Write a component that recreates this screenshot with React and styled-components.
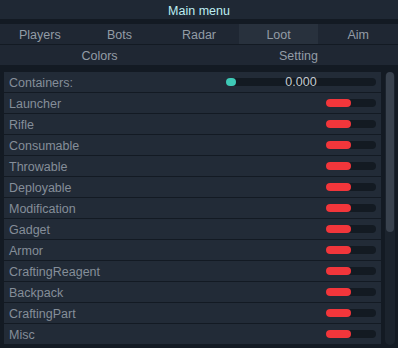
import React from "react";
import styled, { createGlobalStyle } from "styled-components";

const GlobalStyle = createGlobalStyle`
  html, body {
    margin: 0;
    padding: 0;
    background: #131a23;
    font-family: "Liberation Sans", Arial, sans-serif;
    overflow: hidden;
  }
`;

const TABS = ["Players", "Bots", "Radar", "Loot", "Aim"];
const SUB_TABS = ["Colors", "Setting"];
const ITEMS = [
  "Launcher",
  "Rifle",
  "Consumable",
  "Throwable",
  "Deployable",
  "Modification",
  "Gadget",
  "Armor",
  "CraftingReagent",
  "Backpack",
  "CraftingPart",
  "Misc"
];

const App = () => {
  return (
    <Window>
      <GlobalStyle />
      <TitleBar>Main menu</TitleBar>
      <TabRow cols={TABS.length}>
        {TABS.map(t => (
          <Tab key={t} active={t === "Loot"}>
            {t}
          </Tab>
        ))}
      </TabRow>
      <TabRow cols={SUB_TABS.length} bottom>
        {SUB_TABS.map(t => (
          <Tab key={t}>{t}</Tab>
        ))}
      </TabRow>
      <Body>
        <List>
          <Row>
            <Label>Containers:</Label>
            <SliderTrack>
              <Knob />
              <SliderValue>0.000</SliderValue>
            </SliderTrack>
          </Row>
          {ITEMS.map(name => (
            <Row key={name}>
              <Label>{name}</Label>
              <Toggle>
                <ToggleFill />
              </Toggle>
            </Row>
          ))}
        </List>
        <ScrollTrack>
          <ScrollThumb />
        </ScrollTrack>
      </Body>
    </Window>
  );
};

export default App;

const Window = styled.div`
  width: 398px;
  height: 348px;
  display: flex;
  flex-direction: column;
  background: #131a23;
`;

const TitleBar = styled.div`
  height: 19px;
  box-sizing: border-box;
  padding-top: 3px;
  display: flex;
  align-items: center;
  justify-content: center;
  background: #1f2834;
  color: #bdeef2;
  font-size: 12.5px;
  margin-bottom: 5px;
`;

const TabRow = styled.div`
  display: grid;
  grid-template-columns: repeat(${p => p.cols}, 1fr);
  height: 20px;
  background: #1f2733;
  margin-bottom: ${p => (p.bottom ? "7px" : "1px")};
`;

const Tab = styled.div`
  display: flex;
  align-items: center;
  justify-content: center;
  box-sizing: border-box;
  padding-top: 2px;
  font-size: 12.5px;
  color: #939ca6;
  background: ${p => (p.active ? "#28313d" : "transparent")};
`;

const Body = styled.div`
  flex: 1;
  display: flex;
  padding-left: 4px;
  min-height: 0;
`;

const List = styled.div`
  width: 377px;
  display: flex;
  flex-direction: column;
  gap: 1px;
`;

const Row = styled.div`
  height: 20px;
  flex-shrink: 0;
  display: flex;
  align-items: center;
  justify-content: space-between;
  padding: 0 5px;
  background: #222b37;
`;

const Label = styled.span`
  font-size: 12.5px;
  padding-top: 1px;
  color: #858e99;
`;

const SliderTrack = styled.div`
  position: relative;
  width: 150px;
  height: 8px;
  border-radius: 4px;
  background: #131a22;
`;

const Knob = styled.div`
  position: absolute;
  left: 0;
  top: 0;
  width: 10px;
  height: 8px;
  border-radius: 4px;
  background: #3ec9b6;
`;

const SliderValue = styled.span`
  position: absolute;
  left: 0;
  right: 0;
  top: -3px;
  text-align: center;
  font-size: 12.5px;
  line-height: 14px;
  color: #c3c9cf;
`;

const Toggle = styled.div`
  width: 50px;
  height: 8px;
  border-radius: 4px;
  background: #131a22;
  display: flex;
`;

const ToggleFill = styled.div`
  width: 25px;
  height: 8px;
  border-radius: 4px;
  background: #f2363b;
`;

const ScrollTrack = styled.div`
  width: 10px;
  margin-left: 4px;
  height: 273px;
  border-radius: 5px;
  background: #1b232d;
  padding: 0 1px;
  box-sizing: border-box;
`;

const ScrollThumb = styled.div`
  height: 160px;
  border-radius: 4px;
  background: #39424e;
`;
